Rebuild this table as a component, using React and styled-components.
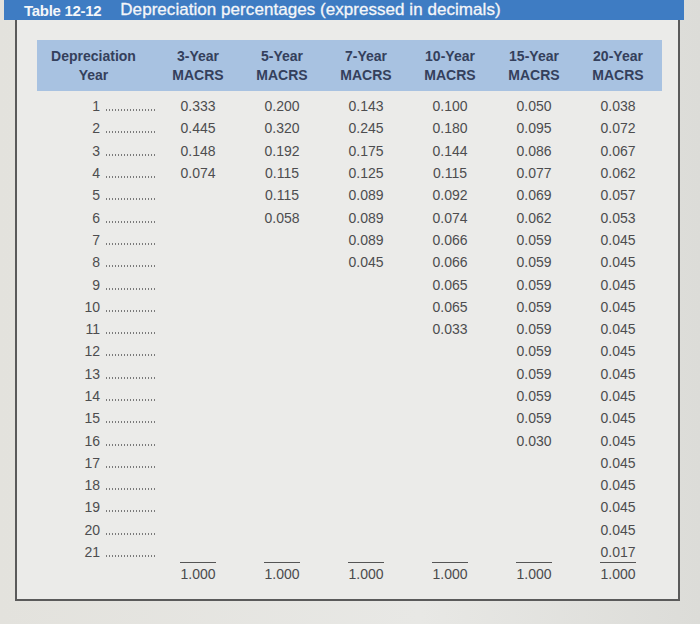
import React from 'react'
import styled, { createGlobalStyle } from 'styled-components'

const GlobalStyle = createGlobalStyle`
  html, body {
    margin: 0;
    padding: 0;
    background: #e4e3df;
    font-family: 'Liberation Sans', Arial, sans-serif;
  }
`

const Page = styled.div`
  width: 700px;
  height: 624px;
  overflow: hidden;
  background: linear-gradient(90deg, #e3e2dd 0%, #e8e8e5 60%, #dcdcd8 100%);
`

const TitleBar = styled.div`
  margin-left: 4px;
  width: 680px;
  height: 20px;
  background: #3e7cc3;
  display: flex;
  align-items: center;
  padding-left: 20px;
  box-sizing: border-box;
  color: #f4f6f9;
  white-space: nowrap;
`

const TableTag = styled.span`
  font-size: 15px;
  font-weight: bold;
  margin-right: 19px;
  letter-spacing: -0.3px;
`

const TitleText = styled.span`
  font-size: 17px;
  letter-spacing: 0.05px;
  -webkit-text-stroke: 0.3px #f4f6f9;
`

const Panel = styled.div`
  margin-left: 15px;
  width: 665px;
  height: 581px;
  box-sizing: border-box;
  border: 2px solid #5a5a5a;
  border-top: none;
  background: #ebebe9;
  padding: 20px 0 0 20px;
`

const Grid = styled.div`
  display: grid;
  grid-template-columns: 119px repeat(6, 84px);
  width: 625px;
`

const HeaderBand = styled(Grid)`
  height: 51px;
  background: #a8c2e1;
  align-items: center;
`

const HeadCell = styled.div`
  text-align: center;
  font-size: 14px;
  font-weight: bold;
  line-height: 19px;
  color: #34405c;
  padding-right: ${p => (p.$first ? '6px' : '0')};
`

const Body = styled.div`
  padding-top: 4px;
`

const Row = styled(Grid)`
  height: 22.3px;
  align-items: center;
  font-size: 14px;
  color: #4d4d4f;
`

const YearCell = styled.div`
  display: flex;
  align-items: baseline;
`

const YearNum = styled.span`
  width: 63px;
  text-align: right;
`

const Leader = styled.span`
  display: inline-block;
  width: 51px;
  height: 2px;
  margin-left: 5px;
  background-image: radial-gradient(circle, #7a7a7a 0.7px, transparent 0.9px);
  background-size: 3px 2px;
  background-repeat: repeat-x;
`

const ValueCell = styled.div`
  text-align: center;
`

const TotalValue = styled.span`
  display: inline-block;
  border-top: 1.5px solid #555;
  padding-top: 3px;
  line-height: 16px;
  color: #4a4a4c;
`

const TotalRow = styled(Grid)`
  margin-top: -1px;
  font-size: 14px;
  align-items: end;
`

const cols = [
  { head: '3-Year', values: ['0.333', '0.445', '0.148', '0.074'] },
  {
    head: '5-Year',
    values: ['0.200', '0.320', '0.192', '0.115', '0.115', '0.058']
  },
  {
    head: '7-Year',
    values: ['0.143', '0.245', '0.175', '0.125', '0.089', '0.089', '0.089', '0.045']
  },
  {
    head: '10-Year',
    values: [
      '0.100', '0.180', '0.144', '0.115', '0.092', '0.074',
      '0.066', '0.066', '0.065', '0.065', '0.033'
    ]
  },
  {
    head: '15-Year',
    values: [
      '0.050', '0.095', '0.086', '0.077', '0.069', '0.062',
      ...Array(9).fill('0.059'),
      '0.030'
    ]
  },
  {
    head: '20-Year',
    values: [
      '0.038', '0.072', '0.067', '0.062', '0.057', '0.053',
      ...Array(14).fill('0.045'),
      '0.017'
    ]
  }
]

const years = Array.from(Array(21).keys()).map(i => i + 1)

const App = () => (
  <Page>
    <GlobalStyle />
    <TitleBar>
      <TableTag>Table 12-12</TableTag>
      <TitleText>Depreciation percentages (expressed in decimals)</TitleText>
    </TitleBar>
    <Panel>
      <HeaderBand>
        <HeadCell $first>
          Depreciation
          <br />
          Year
        </HeadCell>
        {cols.map(({ head }) => (
          <HeadCell key={head}>
            {head}
            <br />
            MACRS
          </HeadCell>
        ))}
      </HeaderBand>
      <Body>
        {years.map((y, i) => (
          <Row key={`year-${y}`}>
            <YearCell>
              <YearNum>{y}</YearNum>
              <Leader />
            </YearCell>
            {cols.map(({ head, values }) => (
              <ValueCell key={head}>{values[i] || ''}</ValueCell>
            ))}
          </Row>
        ))}
        <TotalRow>
          <div />
          {cols.map(({ head }) => (
            <ValueCell key={head}>
              <TotalValue>1.000</TotalValue>
            </ValueCell>
          ))}
        </TotalRow>
      </Body>
    </Panel>
  </Page>
)

export default App
